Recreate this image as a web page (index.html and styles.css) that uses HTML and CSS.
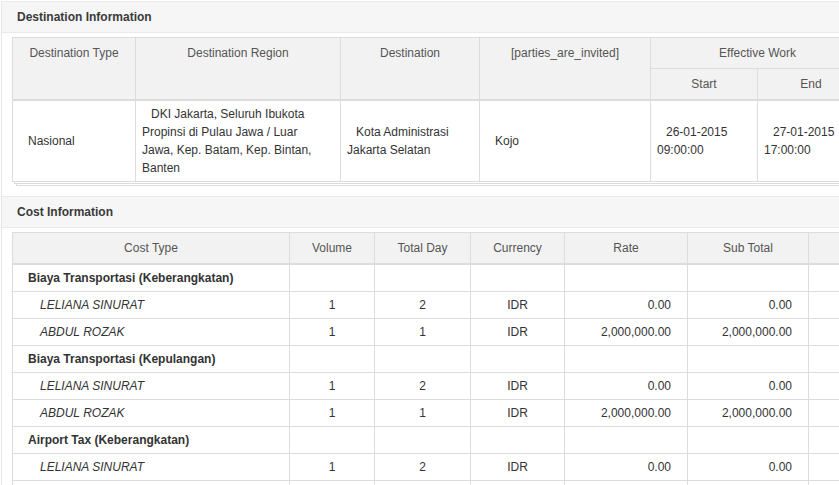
FILE: index.html
```html
<!DOCTYPE html>
<html>
<head>
<meta charset="utf-8">
<link rel="stylesheet" href="styles.css">
</head>
<body>
<div class="panel">
  <div class="section-head">Destination Information</div>
  <div class="section-body">
    <table class="grid dest">
      <colgroup>
        <col class="c123"><col class="c205"><col class="c139"><col class="c171"><col class="c107"><col class="c107">
      </colgroup>
      <thead>
        <tr>
          <th rowspan="2">Destination Type</th>
          <th rowspan="2">Destination Region</th>
          <th rowspan="2">Destination</th>
          <th rowspan="2">[parties_are_invited]</th>
          <th colspan="2">Effective Work</th>
        </tr>
        <tr>
          <th>Start</th>
          <th>End</th>
        </tr>
      </thead>
      <tbody>
        <tr>
          <td>Nasional</td>
          <td class="region">DKI Jakarta, Seluruh Ibukota Propinsi di Pulau Jawa / Luar Jawa, Kep. Batam, Kep. Bintan, Banten</td>
          <td>Kota Administrasi Jakarta Selatan</td>
          <td>Kojo</td>
          <td>26-01-2015 09:00:00</td>
          <td>27-01-2015 17:00:00</td>
        </tr>
      </tbody>
    </table>
  </div>

  <div class="section-head">Cost Information</div>
  <div class="section-body">
    <table class="grid cost">
      <colgroup>
        <col class="c277"><col class="c85"><col class="c96"><col class="c94"><col class="c123"><col class="c121"><col class="c100">
      </colgroup>
      <thead>
        <tr>
          <th>Cost Type</th>
          <th>Volume</th>
          <th>Total Day</th>
          <th>Currency</th>
          <th>Rate</th>
          <th>Sub Total</th>
          <th></th>
        </tr>
      </thead>
      <tbody>
        <tr class="group"><td>Biaya Transportasi (Keberangkatan)</td><td></td><td></td><td></td><td></td><td></td><td></td></tr>
        <tr><td class="name">LELIANA SINURAT</td><td class="ctr">1</td><td class="ctr">2</td><td class="ctr">IDR</td><td class="num">0.00</td><td class="num">0.00</td><td></td></tr>
        <tr><td class="name">ABDUL ROZAK</td><td class="ctr">1</td><td class="ctr">1</td><td class="ctr">IDR</td><td class="num">2,000,000.00</td><td class="num">2,000,000.00</td><td></td></tr>
        <tr class="group"><td>Biaya Transportasi (Kepulangan)</td><td></td><td></td><td></td><td></td><td></td><td></td></tr>
        <tr><td class="name">LELIANA SINURAT</td><td class="ctr">1</td><td class="ctr">2</td><td class="ctr">IDR</td><td class="num">0.00</td><td class="num">0.00</td><td></td></tr>
        <tr><td class="name">ABDUL ROZAK</td><td class="ctr">1</td><td class="ctr">1</td><td class="ctr">IDR</td><td class="num">2,000,000.00</td><td class="num">2,000,000.00</td><td></td></tr>
        <tr class="group"><td>Airport Tax (Keberangkatan)</td><td></td><td></td><td></td><td></td><td></td><td></td></tr>
        <tr><td class="name">LELIANA SINURAT</td><td class="ctr">1</td><td class="ctr">2</td><td class="ctr">IDR</td><td class="num">0.00</td><td class="num">0.00</td><td></td></tr>
        <tr class="filler"><td></td><td></td><td></td><td></td><td></td><td></td><td></td></tr>
      </tbody>
    </table>
  </div>
</div>
</body>
</html>
```

FILE: styles.css
```css
html, body {
  margin: 0;
  padding: 0;
  overflow: hidden;
  background: #fff;
}
body {
  font-family: "Liberation Sans", Arial, sans-serif;
  font-size: 12px;
  color: #333;
}
.panel {
  margin: 1px 0 0 1px;
  border-left: 1px solid #e6e6e6;
  min-height: 600px;
}
.section-head {
  height: 30px;
  line-height: 31px;
  padding-left: 15px;
  background: #f6f6f6;
  border-top: 1px solid #eaeaea;
  border-bottom: 1px solid #eaeaea;
  font-weight: bold;
  color: #3a3a3a;
}
.section-body {
  padding: 4px 0 14px 10px;
}
.grid {
  border-collapse: collapse;
  table-layout: fixed;
  background: #fff;
}
.grid th, .grid td {
  border: 1px solid #dcdcdc;
  overflow: hidden;
}
.grid th {
  background: #f2f2f2;
  color: #555;
  font-weight: normal;
  text-align: center;
  vertical-align: top;
  padding: 8px 8px 7px;
  line-height: 15px;
  white-space: nowrap;
}
.grid thead tr:last-child th,
.grid thead th[rowspan] {
  border-bottom: 2px solid #dcdcdc;
}
.dest {
  width: 852px;
  box-shadow: 2px 2px 0 -1px #fff, 2px 2px 0 0 #dcdcdc, 4px 4px 0 -1px #fff, 4px 4px 0 0 #dcdcdc;
}
.dest td {
  padding: 4px 6px;
  line-height: 18px;
  text-indent: 9px;
  vertical-align: middle;
  color: #333;
}
.dest td.region {
  padding-right: 20px;
}
.cost {
  width: 896px;
}
.cost td {
  padding: 5px 8px;
  line-height: 16px;
  height: 16px;
  white-space: nowrap;
  color: #333;
}
.cost .group td:first-child {
  font-weight: bold;
  padding-left: 15px;
}
.cost td.name {
  font-style: italic;
  padding-left: 27px;
}
.cost td.ctr {
  text-align: center;
}
.cost td.num {
  text-align: right;
  padding-right: 16px;
}
.c123 { width: 123px; }
.c205 { width: 205px; }
.c139 { width: 139px; }
.c171 { width: 171px; }
.c107 { width: 107px; }
.c277 { width: 277px; }
.c85 { width: 85px; }
.c96 { width: 96px; }
.c94 { width: 94px; }
.c121 { width: 121px; }
.c100 { width: 100px; }
```
